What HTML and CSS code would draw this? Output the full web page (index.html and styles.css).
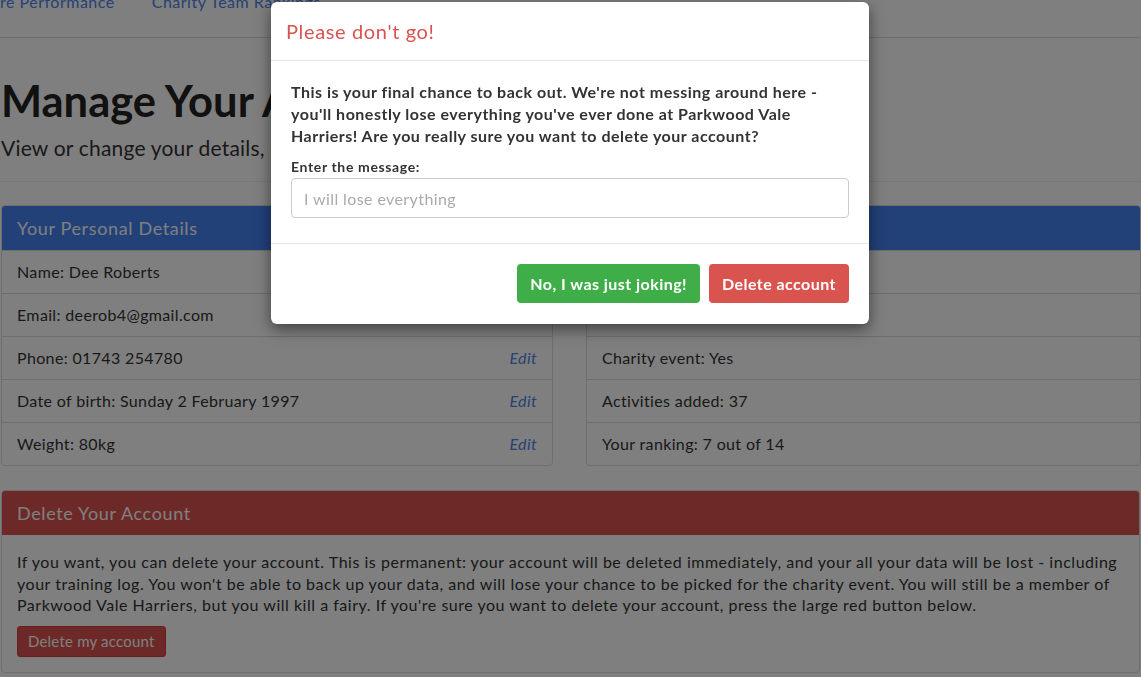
FILE: index.html
```html
<!DOCTYPE html>
<html lang="en">
<head>
<meta charset="utf-8">
<title>Manage Your Account</title>
<link rel="stylesheet" href="styles.css">
</head>
<body>
<div class="page">
  <nav class="topnav">
    <a class="navlink" href="#">re Performance</a>
    <a class="navlink" href="#">Charity Team Rankings</a>
  </nav>
  <h1 class="title">Manage Your Account</h1>
  <p class="lead">View or change your details, check your stats, or delete your account.</p>
  <hr class="rule">
  <div class="cols">
    <section class="panel">
      <div class="panel-heading primary">Your Personal Details</div>
      <ul class="list">
        <li class="item"><span>Name: Dee Roberts</span><a class="edit" href="#">Edit</a></li>
        <li class="item"><span>Email: deerob4@gmail.com</span><a class="edit" href="#">Edit</a></li>
        <li class="item"><span>Phone: 01743 254780</span><a class="edit" href="#">Edit</a></li>
        <li class="item"><span>Date of birth: Sunday 2 February 1997</span><a class="edit" href="#">Edit</a></li>
        <li class="item"><span>Weight: 80kg</span><a class="edit" href="#">Edit</a></li>
      </ul>
    </section>
    <section class="panel">
      <div class="panel-heading primary">Your Statistics</div>
      <ul class="list">
        <li class="item"><span>Member since: 2015</span></li>
        <li class="item"><span>Team: Parkwood</span></li>
        <li class="item"><span>Charity event: Yes</span></li>
        <li class="item"><span>Activities added: 37</span></li>
        <li class="item"><span>Your ranking: 7 out of 14</span></li>
      </ul>
    </section>
  </div>
  <section class="panel danger-panel">
    <div class="panel-heading danger">Delete Your Account</div>
    <div class="panel-body">
      <p class="body-text">If you want, you can delete your account. This is permanent: your account will be deleted immediately, and your all your data will be lost - including your training log. You won't be able to back up your data, and will lose your chance to be picked for the charity event. You will still be a member of Parkwood Vale Harriers, but you will kill a fairy. If you're sure you want to delete your account, press the large red button below.</p>
      <button class="btn-small" type="button">Delete my account</button>
    </div>
  </section>
</div>

<div class="backdrop"></div>

<div class="modal" role="dialog">
  <div class="modal-header">
    <h4 class="modal-title">Please don't go!</h4>
  </div>
  <div class="modal-body">
    <p class="warning">This is your final chance to back out. We're not messing around here - you'll honestly lose everything you've ever done at Parkwood Vale Harriers! Are you really sure you want to delete your account?</p>
    <label class="field-label" for="msg">Enter the message:</label>
    <input class="field" id="msg" type="text" placeholder="I will lose everything">
  </div>
  <div class="modal-footer">
    <button class="btn btn-green" type="button">No, I was just joking!</button>
    <button class="btn btn-red" type="button">Delete account</button>
  </div>
</div>
</body>
</html>
```

FILE: styles.css
```css
* { box-sizing: border-box; }

html, body {
  margin: 0;
  padding: 0;
  height: 100%;
  overflow: hidden;
}

body {
  font-family: Lato, "Open Sans", "Liberation Sans", sans-serif;
  font-size: 16px;
  letter-spacing: 0.04em;
  color: #333;
  background: #fff;
}

.page {
  padding: 0 0 0 1px;
}

.topnav {
  display: flex;
  gap: 37px;
  margin-top: -10px;
  margin-left: -1px;
  padding-bottom: 24px;
  border-bottom: 1px solid #ddd;
}

.navlink {
  color: #4a86e8;
  text-decoration: none;
  line-height: 23px;
  font-size: 16px;
  letter-spacing: 0.5px;
}

.title {
  font-size: 43.5px;
  font-weight: 700;
  line-height: 50px;
  letter-spacing: 0;
  margin: 37px 0 0;
  color: #222;
  white-space: nowrap;
}

.lead {
  font-size: 21px;
  line-height: 1.4;
  letter-spacing: 0.2px;
  margin: 8px 0 0;
  white-space: nowrap;
}

.rule {
  border: 0;
  border-top: 1px solid #eee;
  margin: 19px 0 23px -1px;
}

.cols {
  display: grid;
  grid-template-columns: 552px 1fr;
  gap: 33px;
}

.panel {
  border: 1px solid #ddd;
  border-radius: 4px;
  background: #fff;
  overflow: hidden;
}

.panel-heading {
  padding: 10px 15px;
  font-size: 18px;
  line-height: 24px;
  color: #fff;
}

.panel-heading.primary { background: #4583f3; }
.panel-heading.danger { background: #d9534f; }

.list {
  list-style: none;
  margin: 0;
  padding: 0;
}

.item {
  display: flex;
  justify-content: space-between;
  padding: 10px 15px;
  line-height: 22px;
  letter-spacing: 0.35px;
  border-top: 1px solid #ddd;
}

.edit {
  color: #4a86e8;
  font-style: italic;
  text-decoration: none;
}

.danger-panel {
  margin-top: 24px;
  margin-right: 1px;
}

.panel-body {
  padding: 16px 15px 15px;
}

.body-text {
  margin: 0 0 10px;
  line-height: 21.5px;
  letter-spacing: 0.52px;
}

.btn-small {
  font-family: inherit;
  font-size: 15px;
  line-height: 19px;
  letter-spacing: 0.2px;
  padding: 5px 10px;
  border: 1px solid #d43f3a;
  border-radius: 3px;
  background: #d9534f;
  color: #fff;
}

.backdrop {
  position: fixed;
  inset: 0;
  background: rgba(0, 0, 0, 0.5);
}

.modal {
  position: absolute;
  top: 2px;
  left: 271px;
  width: 598px;
  background: #fff;
  border-radius: 6px;
  box-shadow: 0 5px 15px rgba(0, 0, 0, 0.5);
}

.modal-header {
  padding: 15px;
  border-bottom: 1px solid #e5e5e5;
}

.modal-title {
  margin: 0;
  font-size: 20px;
  font-weight: 400;
  line-height: 28px;
  color: #d9534f;
}

.modal-body {
  padding: 20px 20px 20px;
}

.warning {
  margin: 0 0 11px;
  font-weight: 700;
  line-height: 22px;
  letter-spacing: 0.5px;
  color: #333;
}

.field-label {
  display: block;
  font-size: 14px;
  font-weight: 700;
  line-height: 18px;
  margin-bottom: 2px;
}

.field {
  display: block;
  width: 100%;
  height: 40px;
  padding: 8px 12px;
  font-family: inherit;
  font-size: 16px;
  letter-spacing: 0.4px;
  border: 1px solid #ccc;
  border-radius: 4px;
  margin-bottom: 5px;
  color: #555;
}

.field::placeholder { color: #aaa; }

.modal-footer {
  display: flex;
  justify-content: flex-end;
  gap: 9px;
  padding: 20px 20px 21px;
  border-top: 1px solid #e5e5e5;
}

.btn {
  font-family: inherit;
  font-size: 16px;
  font-weight: 700;
  line-height: 23px;
  letter-spacing: 0.45px;
  padding: 8px 13px;
  border: 0;
  border-radius: 4px;
  color: #fff;
}

.btn-green { background: #3fae49; }
.btn-red { background: #d9534f; }
```
